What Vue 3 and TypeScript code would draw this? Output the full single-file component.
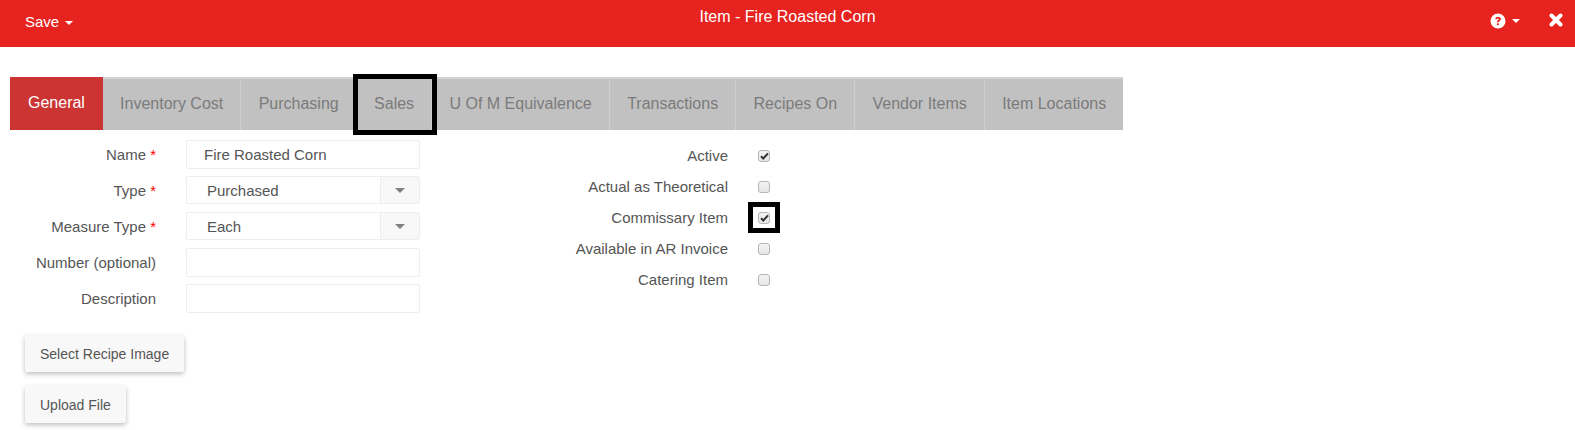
<template>
  <div class="page">
    <header class="topbar">
      <div class="save">Save <span class="caret"></span></div>
      <div class="title">Item - Fire Roasted Corn</div>
      <div class="actions">
        <span class="help">
          <svg width="16" height="16" viewBox="0 0 16 16">
            <circle cx="8" cy="8" r="7.5" fill="#fff" />
            <path d="M5.300 6.200c.1-1.600 1.300-2.400 2.800-2.400 1.600 0 2.800.9 2.800 2.300 0 1.200-.8 1.700-1.500 2.200-.5.300-.7.5-.7 1H6.900c0-1.200.5-1.700 1.200-2.200.5-.3.8-.5.8-1 0-.4-.3-.7-.8-.7-.6 0-.9.3-1 .9z" fill="#e6231f" />
            <rect x="6.900" y="10.300" width="1.900" height="1.900" fill="#e6231f" />
          </svg>
          <span class="caret"></span>
        </span>
        <svg class="close" width="14" height="14" viewBox="0 0 14 14">
          <path d="M2.500 2.500l9 9M11.500 2.500l-9 9" stroke="#fff" stroke-width="4" stroke-linecap="round" />
        </svg>
      </div>
    </header>

    <nav class="tabs">
      <div
        v-for="tab in tabs"
        :key="tab"
        class="tab"
        :class="{ active: tab === 'General', marked: tab === 'Sales' }"
      >
        {{ tab }}
      </div>
    </nav>

    <main class="form">
      <section class="fields">
        <div class="row" v-for="f in fields" :key="f.label">
          <label class="label">{{ f.label }}<span v-if="f.required" class="req"> *</span></label>
          <div class="control" :class="{ select: f.select }">
            <span class="value" :class="{ indented: f.select }">{{ f.value }}</span>
            <span v-if="f.select" class="arrow"><span class="arrow-down"></span></span>
          </div>
        </div>
        <div class="buttons">
          <button class="btn">Select Recipe Image</button>
          <button class="btn">Upload File</button>
        </div>
      </section>

      <section class="checks">
        <div class="check-row" v-for="c in checks" :key="c.label">
          <span class="check-label">{{ c.label }}</span>
          <span class="box-wrap" :class="{ marked: c.marked }">
            <span class="box">
              <svg v-if="c.checked" width="9" height="8" viewBox="0 0 9 8">
                <path d="M1 4.200l2.300 2.300L8 1.300" fill="none" stroke="#333" stroke-width="2" />
              </svg>
            </span>
          </span>
        </div>
      </section>
    </main>
  </div>
</template>

<script setup lang="ts">
interface Field {
  label: string;
  value: string;
  required?: boolean;
  select?: boolean;
}

const tabs: string[] = [
  'General',
  'Inventory Cost',
  'Purchasing',
  'Sales',
  'U Of M Equivalence',
  'Transactions',
  'Recipes On',
  'Vendor Items',
  'Item Locations',
];

const fields: Field[] = [
  { label: 'Name', value: 'Fire Roasted Corn', required: true },
  { label: 'Type', value: 'Purchased', required: true, select: true },
  { label: 'Measure Type', value: 'Each', required: true, select: true },
  { label: 'Number (optional)', value: '' },
  { label: 'Description', value: '' },
];

const checks = [
  { label: 'Active', checked: true },
  { label: 'Actual as Theoretical', checked: false },
  { label: 'Commissary Item', checked: true, marked: true },
  { label: 'Available in AR Invoice', checked: false },
  { label: 'Catering Item', checked: false },
];
</script>

<style>
html,
body {
  margin: 0;
  background: #fff;
}
</style>

<style scoped>
.page {
  width: 1575px;
  height: 430px;
  overflow: hidden;
  font-family: "Liberation Sans", Arial, sans-serif;
  font-size: 15px;
  color: #555;
}

.topbar {
  height: 47px;
  background: #e6231f;
  color: #fff;
  display: flex;
  justify-content: space-between;
  position: relative;
}

.save {
  padding: 13px 0 0 25px;
  font-size: 15px;
  line-height: 18px;
}

.caret {
  display: inline-block;
  width: 0;
  height: 0;
  margin-left: 2px;
  vertical-align: middle;
  border-top: 4px solid #fff;
  border-left: 4px solid transparent;
  border-right: 4px solid transparent;
}

.title {
  position: absolute;
  left: 0;
  right: 0;
  top: 8px;
  text-align: center;
  font-size: 16px;
  line-height: 18px;
}

.actions {
  display: flex;
  align-items: flex-start;
  padding-top: 13px;
  padding-right: 12px;
}

.help {
  display: flex;
  align-items: center;
  gap: 4px;
  margin-right: 29px;
}

.tabs {
  display: flex;
  width: max-content;
  height: 51px;
  margin: 30px 0 0 10px;
  border-top: 2px solid #d4d4d4;
  background: #c1c1c1;
}

.tab {
  padding: 0 17.2px;
  font-size: 16px;
  line-height: 49px;
  color: #7b7b7b;
  border-right: 1px solid #d0d0d0;
  position: relative;
}

.tab:last-child {
  border-right: 0;
}

.tab.active {
  background: #cc3333;
  color: #fff;
  padding: 0 18px;
  margin-top: -2px;
  height: 53px;
  line-height: 51px;
  border-right: 0;
}

.tab.marked::after {
  content: "";
  position: absolute;
  left: -4px;
  top: -5px;
  width: 74px;
  height: 51px;
  border: 5px solid #000;
}

.form {
  display: flex;
}

.fields {
  width: 420px;
  padding-top: 10px;
}

.row {
  display: flex;
  align-items: flex-start;
  height: 29px;
  margin-bottom: 7px;
}

.label {
  width: 156px;
  text-align: right;
  line-height: 30px;
}

.req {
  color: #f00;
}

.control {
  margin-left: 30px;
  width: 234px;
  height: 29px;
  border: 1px solid #eee;
  border-radius: 2px;
  display: flex;
  align-items: center;
  box-sizing: border-box;
}

.control.select {
  height: 28px;
}

.value {
  padding-left: 17px;
  flex: 1;
}

.value.indented {
  padding-left: 20px;
}

.arrow {
  width: 38px;
  height: 100%;
  background: #f8f8f8;
  border-left: 1px solid #eee;
  display: flex;
  align-items: center;
  justify-content: center;
}

.arrow-down {
  width: 0;
  height: 0;
  border-top: 5px solid #808080;
  border-left: 5px solid transparent;
  border-right: 5px solid transparent;
}

.buttons {
  display: flex;
  flex-direction: column;
  align-items: flex-start;
  gap: 14px;
  padding: 15px 0 0 25px;
}

.btn {
  height: 37px;
  padding: 0 15px;
  border: 0;
  border-radius: 2px;
  background: #f8f8f8;
  color: #555;
  font-family: inherit;
  font-size: 14px;
  box-shadow: 0 2px 5px rgba(0, 0, 0, 0.26);
}

.checks {
  padding-top: 10px;
  width: 350px;
}

.check-row {
  display: flex;
  align-items: center;
  height: 31px;
}

.check-label {
  width: 308px;
  text-align: right;
}

.box-wrap {
  margin-left: 30px;
  width: 12px;
  height: 12px;
  position: relative;
  display: block;
}

.box {
  display: flex;
  align-items: center;
  justify-content: center;
  width: 12px;
  height: 12px;
  box-sizing: border-box;
  border: 1px solid #b5b5b5;
  border-radius: 3px;
  background: linear-gradient(#f4f4f4, #e6e6e6);
}

.box-wrap.marked::after {
  content: "";
  position: absolute;
  left: -10px;
  top: -10px;
  width: 22px;
  height: 21px;
  border: 5px solid #000;
}
</style>
